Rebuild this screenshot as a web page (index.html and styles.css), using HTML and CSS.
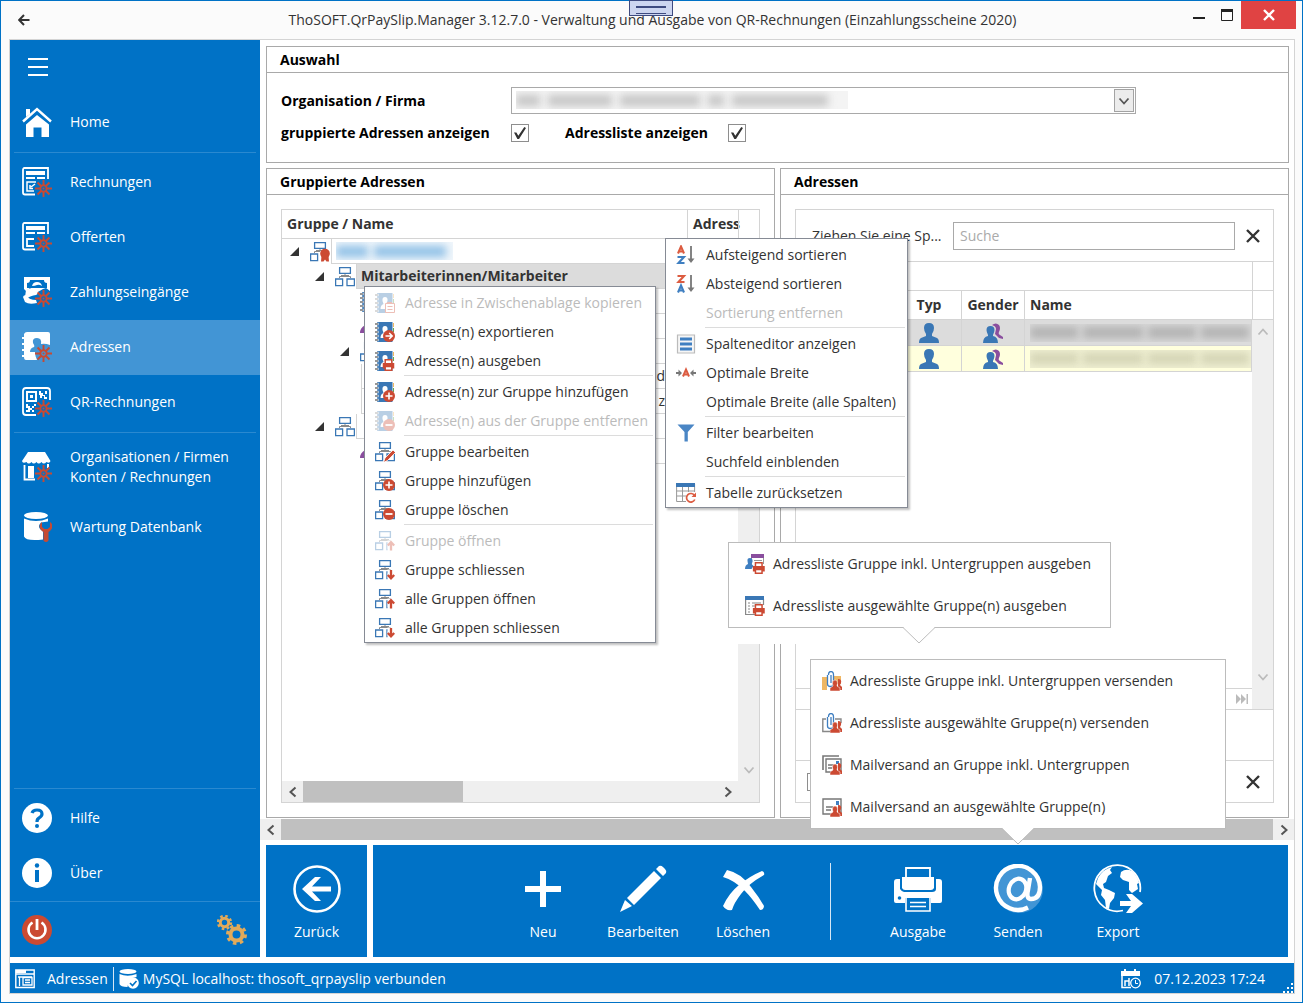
FILE: index.html
```html
<!DOCTYPE html>
<html lang="de">
<head>
<meta charset="utf-8">
<title>ThoSOFT.QrPaySlip.Manager</title>
<link rel="stylesheet" href="styles.css">
</head>
<body>
<svg class="sprite" aria-hidden="true">
  <symbol id="spark" viewBox="0 0 16 16"><g stroke="#c64a33" stroke-width="1.8" fill="none"><circle cx="8" cy="8" r="3"/><path d="M8 0v5M8 11v5M0 8h5M11 8h5M2.4 2.4l3.5 3.5M10.1 10.1l3.5 3.5M13.6 2.4l-3.5 3.5M5.9 10.1l-3.5 3.5"/></g><circle cx="8" cy="8" r="1" fill="#c64a33"/></symbol>
  <symbol id="home" viewBox="0 0 30 30"><path d="M4 2h4v5L4 10z" fill="#fff"/><path d="M1 14.5 15 2.2l14 12.3" fill="none" stroke="#fff" stroke-width="2.4"/><path d="M4 17.500 15 8l12 9.500V30h-7.500V20.500h-8V30H4z" fill="#fff"/></symbol>
  <symbol id="bill" viewBox="0 0 30 30"><path d="M26 12V1H2.500Q1 1 1 3v22.500q0 2 2 2h10" fill="none" stroke="#fff" stroke-width="1.800"/><path d="M4 4h19v4H4zM4 10h9v2H4zM15 10h8v2h-8z" fill="#fff"/><path d="M14 15H5v9h7M8 18v3.500h3M9 20l4-3" fill="none" stroke="#fff" stroke-width="1.500"/><use href="#spark" x="13" y="13" width="17" height="17"/></symbol>
  <symbol id="offer" viewBox="0 0 30 30"><path d="M26 12V1H2.500Q1 1 1 3v22.500q0 2 2 2h10" fill="none" stroke="#fff" stroke-width="1.800"/><path d="M4 4h19v4H4zM4 10h9v2H4zM15 10h8v2h-8z" fill="#fff"/><path d="M12 17H5v7h7" fill="none" stroke="#fff" stroke-width="1.800"/><use href="#spark" x="13" y="13" width="17" height="17"/></symbol>
  <symbol id="pay" viewBox="0 0 30 30"><path d="M2 0h26v14l-4-3-3 1-7 4-6-5-4 3-2-2z" fill="#fff"/><path d="M5 6q3 0 3-3h14q0 3 3 3v5H5z" fill="#0072c6"/><path d="M10 9q1-4 5-4t5 4q-3-2-5-1t-5 1z" fill="#fff"/><path d="M4 13q5-3 9 0l4 3-3 2q-6 1-8 3l-3-1zM1 20q1-3 4-1 2 4 9 4l1 3q-8 2-12-1z" fill="#fff"/><use href="#spark" x="13" y="13" width="17" height="17"/></symbol>
  <symbol id="contacts" viewBox="0 0 30 30"><path d="M2 2q1-2 3-2h21q2 0 2 2v11q-5-2-9-1 1-6-4-6t-4 5q2 3 1 4-4 1-4 5h5q0 4 2 8H4q-2 0-2-3H0v-2h2v-4H0v-2h2v-4H0v-2h2V7H0V5h2z" fill="#fff"/><use href="#spark" x="13" y="13" width="17" height="17"/></symbol>
  <symbol id="qr" viewBox="0 0 30 30"><path d="M28 13V4q0-3-3-3H4Q1 1 1 4v21q0 3 3 3h10" fill="none" stroke="#fff" stroke-width="1.800"/><path d="M5 5h9v9H5z" fill="none" stroke="#fff" stroke-width="2"/><path d="M8 8h3v3H8zM17 4h2v2h2v2h2V4h2v3h-2v3h2v2h-3v-3h-2v2h-2V8h-1zM4 17h2v2h2v2h2v-2h2v-2h2v2h-2v2h-2v2h2v2h-2v-2H8v2H4v-2h2v-2H4z" fill="#fff"/><use href="#spark" x="13" y="13" width="17" height="17"/></symbol>
  <symbol id="shop" viewBox="0 0 30 30"><path d="M6 0h17l5.500 9q-1 3-4 1-3 3-5 0-3 3-5 0-3 3-5 0-3 3-5 0-4 2-4.500-1z" fill="#fff"/><path d="M2.500 13v14.500H13" fill="none" stroke="#fff" stroke-width="1.800"/><path d="M6 14h6v12H6z" fill="#fff"/><path d="M26 12v4" stroke="#fff" stroke-width="2"/><use href="#spark" x="13" y="13" width="17" height="17"/></symbol>
  <symbol id="dbtool" viewBox="0 0 30 30"><ellipse cx="14" cy="3.500" rx="12" ry="3.500" fill="#fff"/><path d="M2 6.500q12 5 24 0v3l-7 1q-5 5 2 9v8q-17 2-19-3z" fill="#fff"/><path d="M20 10q-5 4 0 9l1.500 1v8.500q2.500 3 5 0V20l1.500-1q5-5 0-9v5l-2.500 2h-3L20 15z" fill="#c64a33"/></symbol>
  <symbol id="help" viewBox="0 0 30 30"><circle cx="15" cy="15" r="15" fill="#fff"/><path d="M10 10q1-3 5-3 5 0 5 4 0 2-3 4-2 1-2 4" fill="none" stroke="#0072c6" stroke-width="3.200"/><circle cx="15" cy="23" r="2" fill="#0072c6"/></symbol>
  <symbol id="info" viewBox="0 0 30 30"><circle cx="15" cy="15" r="15" fill="#fff"/><circle cx="15" cy="7.500" r="2.200" fill="#0072c6"/><path d="M15 12v12" stroke="#0072c6" stroke-width="4"/></symbol>
  <symbol id="power" viewBox="0 0 30 30"><circle cx="15" cy="15" r="15" fill="#cb4a32"/><path d="M10.500 7.500a8.500 8.500 0 1 0 9 0" fill="none" stroke="#fff" stroke-width="2.600"/><path d="M15 4v11" stroke="#fff" stroke-width="2.800"/></symbol>
  <symbol id="gears" viewBox="0 0 30 30"><g fill="none" stroke="#e2aa5a"><circle cx="7.500" cy="7.500" r="4.200" stroke-width="3"/><circle cx="7.500" cy="7.500" r="6.500" stroke-width="2.400" stroke-dasharray="2.550 2.550"/><circle cx="19.500" cy="19.500" r="6" stroke-width="4"/><circle cx="19.500" cy="19.500" r="9" stroke-width="3" stroke-dasharray="3.530 3.530"/></g></symbol>

  <symbol id="back" viewBox="0 0 48 48"><circle cx="24" cy="24" r="22.500" fill="none" stroke="#fff" stroke-width="2.600"/><path d="M9 24 22 12h6L19 21.500h19v5H19L28 36h-6z" fill="#fff"/></symbol>
  <symbol id="plus" viewBox="0 0 48 48"><path d="M24 6v36M6 24h36" stroke="#fff" stroke-width="6"/></symbol>
  <symbol id="pencil" viewBox="0 0 48 48"><path d="M1 47 6 35l7 6zM8 33 35 6l7 7L15 40zM37 4l3-3q2-1 4 1l2 2q2 2 1 4l-3 3z" fill="#fff"/></symbol>
  <symbol id="cross" viewBox="0 0 48 48"><path d="M4 12 8 5Q22 8 32 22q8 10 13 19 0 4-4 4Q33 33 26 26 15 15 4 12z" fill="#fff"/><path d="M43 6q3 1 2 4Q29 19 22 29q-7 9-9 16-6 1-9-4 6-13 16-21Q31 11 43 6z" fill="#fff"/></symbol>
  <symbol id="printer" viewBox="0 0 48 48"><path d="M12 13V3h24v10" fill="none" stroke="#fff" stroke-width="1.800"/><path d="M8 12h32v11q-1 2-3 2H11q-2 0-3-2z" fill="#fff"/><path d="M3 14h3v10q2 3 4 3h28q4 0 4-3V14h3q3 0 3 3v19q0 2-2 2h-9v-5H11v5H2q-2 0-2-2V17q0-3 3-3z" fill="#fff"/><circle cx="5.500" cy="33" r="1.800" fill="#0072c6"/><path d="M12 33v13h24V33M16 37.500h16M16 41.500h16" fill="none" stroke="#fff" stroke-width="1.600"/></symbol>
  <symbol id="at" viewBox="0 0 50 50"><circle cx="26" cy="25" r="24" fill="#4295d5"/><g fill="none" stroke="#fff"><path d="M35 43.500A22 22 0 1 1 47 23q0 12-9 12-5 0-3-9l2-12" stroke-width="4.400"/><ellipse cx="24.500" cy="25" rx="8.500" ry="10.500" transform="rotate(22 24.500 25)" stroke-width="4.200"/></g></symbol>
  <symbol id="globe" viewBox="0 0 50 50"><path d="M30 46.500A23 23 0 1 1 47 28" fill="none" stroke="#fff" stroke-width="1.800"/><path d="M5 14Q10 5 19 3l-2 3 2 3-4 3-2 6-3 2 1 4 5 2 6 3-1 5-4 5-1 6-3-1-1-8-4-5 1-5-6-6zM28 8q5-4 11-1 6 6 7 12l-2 1 1 5-6 4-3-3v-8l-6-2-3-3z" fill="#fff"/><path d="M27 37v5h11l-5 7h6l11-9.500L39 30h-6l5 7z" fill="#fff"/></symbol>

  <symbol id="book" viewBox="0 0 20 20"><path d="M2 0h15.500v20H2z" fill="#3a77b5"/><path d="M0 2h3.500M0 6h3.500M0 10h3.500M0 14h3.500M0 18h3.500" stroke="#fff" stroke-width="2.600"/><path d="M0 2h3M0 6h3M0 10h3M0 14h3M0 18h3" stroke="#777" stroke-width="1.400"/><path d="M18.500 1v4" stroke="#efb763"/><path d="M18.500 6v4" stroke="#6aa84f"/><path d="M10 4q3 0 2.500 4l-1 2 3 1.500V16H5.500q0-4 3-5l-1-3Q7 4 10 4z" fill="#fff"/></symbol>
  <symbol id="disc" viewBox="0 0 12 12"><circle cx="6" cy="6" r="6" fill="#cc4a33"/></symbol>
  <symbol id="miniprint" viewBox="0 0 12 12"><path d="M2 0h8v6H2z" fill="#fff"/><path d="M2.700 5V.800h6.600V5" fill="none" stroke="#cc4a33" stroke-width="1.500"/><path d="M0 4h12v5.500H0z" fill="#cc4a33"/><path d="M2.700 7.500h6.600v3.700H2.700z" fill="#fff" stroke="#cc4a33" stroke-width="1.500"/></symbol>
  <symbol id="book-copy" viewBox="0 0 20 20"><use href="#book"/><path d="M10.500 10.500h9v9h-9z" fill="#fff" stroke="#cc4a33"/><path d="M12 9.500h5M12.500 13.500h5M12.500 16.500h5" stroke="#cc4a33"/></symbol>
  <symbol id="book-export" viewBox="0 0 20 20"><use href="#book"/><use href="#disc" x="8" y="8" width="12" height="12"/><path d="M10.500 14h6.500M14.200 11l3 3-3 3" fill="none" stroke="#fff" stroke-width="1.500"/></symbol>
  <symbol id="book-print" viewBox="0 0 20 20"><use href="#book"/><use href="#miniprint" x="7.500" y="8" width="12" height="12"/></symbol>
  <symbol id="book-plus" viewBox="0 0 20 20"><use href="#book"/><use href="#disc" x="8" y="8" width="12" height="12"/><path d="M10.500 14h7M14 10.500v7" stroke="#fff" stroke-width="1.600"/></symbol>
  <symbol id="book-minus" viewBox="0 0 20 20"><use href="#book"/><use href="#disc" x="8" y="8" width="12" height="12"/><path d="M10.500 14h7" stroke="#fff" stroke-width="1.800"/></symbol>
  <symbol id="org" viewBox="0 0 20 20"><path d="M10 7v2.500M4.500 11V9.500h11V11M6 8.500h8" fill="none" stroke="#8a8a8a"/><g fill="#fff" stroke="#3a77b5" stroke-width="1.300"><path d="M4.600.6h10.800v5.800H4.600zM.6 12h7v6.600h-7zM12 12h7.400v6.600H12z"/></g></symbol>
  <symbol id="org-award" viewBox="0 0 20 20"><use href="#org"/><path d="M10 9h10v11H10z" fill="#fff"/><circle cx="15" cy="11.500" r="4.800" fill="#cc4a33"/><path d="M11.500 13.500h7l.5 6h-2.500l-1.500-2-1.500 2H11z" fill="#cc4a33"/></symbol>
  <symbol id="org-edit" viewBox="0 0 20 20"><use href="#org"/><path d="M8.500 20.500 10 16l8-8 2.500 2.500-8 8z" fill="#cc4a33" stroke="#fff" stroke-width=".8"/></symbol>
  <symbol id="org-plus" viewBox="0 0 20 20"><use href="#org"/><use href="#disc" x="8" y="8" width="12" height="12"/><path d="M10.500 14h7M14 10.500v7" stroke="#fff" stroke-width="1.600"/></symbol>
  <symbol id="org-minus" viewBox="0 0 20 20"><use href="#org"/><use href="#disc" x="8" y="8" width="12" height="12"/><path d="M10.500 14h7" stroke="#fff" stroke-width="1.800"/></symbol>
  <symbol id="org-up" viewBox="0 0 20 20"><use href="#org"/><path d="M12.500 9.500H20V20h-7.500z" fill="#fff"/><path d="M16 19.500V11M12.800 14.500l3.200-3.300 3.200 3.300" fill="none" stroke="#cc4a33" stroke-width="2.300"/></symbol>
  <symbol id="org-down" viewBox="0 0 20 20"><use href="#org"/><path d="M12.500 9.500H20V20h-7.500z" fill="#fff"/><path d="M16 10v8.500M12.800 15 16 18.300l3.200-3.300" fill="none" stroke="#cc4a33" stroke-width="2.300"/></symbol>

  <symbol id="sort-az" viewBox="0 0 20 20"><g fill="none" stroke-width="2.100"><path d="M2 8.500 5 1.500l3 7M3.500 6.500h3" stroke="#dc5c41"/><path d="M1.500 12H8l-5.500 6H8.500" stroke="#3f7fc1"/></g><path d="M15 1v14" stroke="#777" stroke-width="1.800"/><path d="M11.500 13.500h7L15 18z" fill="#777"/></symbol>
  <symbol id="sort-za" viewBox="0 0 20 20"><g fill="none" stroke-width="2.100"><path d="M1.500 2H8L2.500 8H8.500" stroke="#dc5c41"/><path d="M2 18.500 5 11.500l3 7M3.500 16.500h3" stroke="#3f7fc1"/></g><path d="M15 1v14" stroke="#777" stroke-width="1.800"/><path d="M11.500 13.500h7L15 18z" fill="#777"/></symbol>
  <symbol id="columns" viewBox="0 0 20 20"><path d="M1.500 1h17v18h-17z" fill="#f6f6f6" stroke="#bbb" stroke-width="1.200"/><path d="M4 5h12M4 10h12M4 15h12" stroke="#3f7fc1" stroke-width="3.200"/></symbol>
  <symbol id="fit" viewBox="0 0 20 20"><path d="M7 13.500 10 6.500l3 7M8.500 11.500h3" fill="none" stroke="#dc5c41" stroke-width="2"/><path d="M0 10h4M16 10h4" stroke="#777" stroke-width="2"/><path d="M2.500 6.500 6 10l-3.500 3.500zM17.500 6.500 14 10l3.500 3.500z" fill="#777"/></symbol>
  <symbol id="filter" viewBox="0 0 20 20"><path d="M1.500 1.500h17L11.800 9v9.500H8.500V9z" fill="#4a86c5"/></symbol>
  <symbol id="table-reset" viewBox="0 0 20 20"><path d="M.6 1h18v17.500h-18zM.6 8h18M.6 13h18M6.500 3v15M12.500 3v15" fill="#fff" stroke="#999"/><path d="M0 0h19v4H0z" fill="#3a77b5"/><path d="M10 9h10v11H10z" fill="#fff"/><path d="M18.500 12.500a4.300 4.300 0 1 0 .3 4" fill="none" stroke="#dc5c41" stroke-width="1.700"/><path d="M20 9.500v4.500h-4.500z" fill="#dc5c41"/></symbol>

  <symbol id="list-sub" viewBox="0 0 20 20"><path d="M6 0h13v4H6z" fill="#8a4e9e"/><path d="M6.500 4v9M18.500 4v6M9 6.500h8" stroke="#999" fill="none"/><path d="M5 4q3 0 2.500 4l-1 2 2 2-2 3H0q0-4 3-5l-.5-3Q2 4 5 4z" fill="#3f7fc1"/><use href="#miniprint" x="7.500" y="8" width="12.500" height="12"/></symbol>
  <symbol id="list" viewBox="0 0 20 20"><path d="M.6 3v15.500H10M18.500 3v6" fill="none" stroke="#888" stroke-width="1.200"/><path d="M0 0h19v4H0z" fill="#3a77b5"/><path d="M3 7h2M3 10h2M3 13h2M3 16h2M7 7h9M7 10h4" stroke="#888" stroke-width="1.200"/><use href="#miniprint" x="7.500" y="8" width="12.500" height="12"/></symbol>
  <symbol id="pawn" viewBox="0 0 12 12"><path d="M8 0q4 0 3 4l-1 2 2 2v3H8V2z" fill="#cc4a33"/><path d="M5 1q3 0 2.500 3.500L7 7l3 2v3H0V9l3-2-.500-2.500Q2 1 5 1z" fill="#cc4a33" stroke="#fff" stroke-width=".5"/></symbol>
  <symbol id="clip" viewBox="0 0 20 20"><path d="M5.500 4v9q0 2.500 3 2.500T11.500 13V4q0-3.500-2.500-3.500T6.500 4" fill="#fff" stroke="#3f7fc1" stroke-width="1.300"/><path d="M9 4v8" stroke="#3f7fc1" stroke-width="1.300"/></symbol>
  <symbol id="clip-sub" viewBox="0 0 20 20"><path d="M0 6h5v13H0zM11 5h8v8h-8z" fill="#efb763"/><use href="#clip"/><use href="#pawn" x="8" y="8" width="12" height="12"/></symbol>
  <symbol id="clip-one" viewBox="0 0 20 20"><path d="M4 6H.8v12.500H8M13 6h6v4" fill="none" stroke="#888" stroke-width="1.400"/><use href="#clip"/><use href="#pawn" x="8" y="8" width="12" height="12"/></symbol>
  <symbol id="mail-sub" viewBox="0 0 20 20"><path d="M1 15V1h16" fill="none" stroke="#777" stroke-width="1.600"/><path d="M4 4h15v13H4zM6 10h6M6 13h4" fill="#fff" stroke="#777" stroke-width="1.400"/><path d="M14 6h3v3h-3z" fill="#3f7fc1"/><use href="#pawn" x="8" y="8" width="12" height="12"/></symbol>
  <symbol id="mail-one" viewBox="0 0 20 20"><path d="M1 2h18v15H1zM4 10h7M4 13h5" fill="#fff" stroke="#777" stroke-width="1.400"/><path d="M14 4h3v4h-3z" fill="#3f7fc1"/><use href="#pawn" x="8" y="8" width="12" height="12"/></symbol>
  <symbol id="person" viewBox="0 0 20 20"><path d="M10 0q5 0 5 5 0 3-2 6v2l5 2q2 1 2 5H0q0-4 2-5l5-2v-2Q5 8 5 5q0-5 5-5z" fill="#3a77b5"/></symbol>
  <symbol id="gender" viewBox="0 0 20 20"><path d="M9 2q4-3 7 0 2 3 0 7-1 2 1 3l3 2v2l-4-1-4-4 1-5q0-3-4-4z" fill="#8a4e9e"/><path d="M7.500 3q4 0 4 4 0 2-1.500 5v1q5 1 5 7H0q0-6 5-7v-1Q3.500 9 3.500 7q0-4 4-4z" fill="#3a77b5"/></symbol>
  <symbol id="woman" viewBox="0 0 20 20"><path d="M5 8q-5 3-5 8h8z" fill="#8a4e9e"/></symbol>

  <symbol id="form" viewBox="0 0 20 20"><path d="M.8 1h18.400v17.500H.8zM1 5h18" fill="none" stroke="#fff" stroke-width="1.400"/><path d="M1 1h10v3H1z" fill="#fff"/><path d="M3 8h14M4.500 8v9M8 8.500h9V16H8zM10 11h5M10 13.500h5" fill="none" stroke="#fff" stroke-width="1.300"/></symbol>
  <symbol id="db-ok" viewBox="0 0 20 20"><ellipse cx="9" cy="2.500" rx="8.500" ry="2.500" fill="#fff"/><path d="M.5 5q8 3.500 17 0v3q-8 0-9 10-7 0-8-3z" fill="#fff"/><circle cx="14" cy="14" r="5.800" fill="#fff"/><path d="M11 14l2.500 2.500 4-4.500" fill="none" stroke="#0072c6" stroke-width="1.600"/></symbol>
  <symbol id="calendar" viewBox="0 0 20 20"><path d="M0 2h3V0h2v2h8V0h2v2h4v5H0z" fill="#fff"/><path d="M1 7v11.500h9M4 17v-5h4M8 9v8" fill="none" stroke="#fff" stroke-width="1.500"/><circle cx="14.500" cy="14" r="4.800" fill="#0072c6" stroke="#fff" stroke-width="1.300"/><path d="M14.500 11v3.500h2.500" fill="none" stroke="#fff"/></symbol>
  <symbol id="left" viewBox="0 0 10 12"><path d="M7.500 1.500 2.500 6l5 4.500" fill="none" stroke="currentColor" stroke-width="2"/></symbol>
  <symbol id="right" viewBox="0 0 10 12"><path d="M2.500 1.500l5 4.500-5 4.500" fill="none" stroke="currentColor" stroke-width="2"/></symbol>
  <symbol id="down" viewBox="0 0 12 10"><path d="M1.500 2.500 6 7.500l4.500-5" fill="none" stroke="currentColor" stroke-width="1.800"/></symbol>
  <symbol id="up" viewBox="0 0 12 10"><path d="M1.500 7.500 6 2.500l4.500 5" fill="none" stroke="currentColor" stroke-width="1.800"/></symbol>
  <symbol id="x" viewBox="0 0 14 14"><path d="M1 1l12 12M13 1 1 13" stroke="currentColor" stroke-width="2.400"/></symbol>
</svg>

<div class="window">
  <header class="titlebar">
    <button class="nav-back" aria-label="Zurück"><svg viewBox="0 0 12 12"><path d="M11.500 6H2M6 1 1.200 6 6 11" fill="none" stroke="#333" stroke-width="2"/></svg></button>
    <h1>ThoSOFT.QrPaySlip.Manager 3.12.7.0 - Verwaltung und Ausgabe von QR-Rechnungen (Einzahlungsscheine 2020)</h1>
    <div class="win-buttons">
      <button class="win-btn" aria-label="Minimieren"><svg viewBox="0 0 12 12"><path d="M0 9h12" stroke="#222" stroke-width="2"/></svg></button>
      <button class="win-btn" aria-label="Maximieren"><svg viewBox="0 0 12 12"><path d="M.5 1h11v10.500H.5z" fill="none" stroke="#222"/><path d="M0 0h12v3H0z" fill="#222"/></svg></button>
      <button class="win-btn close" aria-label="Schliessen"><svg viewBox="0 0 12 12"><path d="M1 1l10 10M11 1 1 11" stroke="#fff" stroke-width="2.400"/></svg></button>
    </div>
    <span class="grab-tab"></span>
  </header>

  <div class="client">
    <nav class="sidebar">
      <button class="burger" aria-label="Menü"><svg viewBox="0 0 20 18"><path d="M0 1h20M0 9h20M0 17h20" stroke="#fff" stroke-width="2"/></svg></button>
      <a class="nav-item" href="#"><svg><use href="#home"/></svg>Home</a>
      <hr>
      <a class="nav-item" href="#"><svg><use href="#bill"/></svg>Rechnungen</a>
      <a class="nav-item" href="#"><svg><use href="#offer"/></svg>Offerten</a>
      <a class="nav-item" href="#"><svg><use href="#pay"/></svg>Zahlungseingänge</a>
      <a class="nav-item active" href="#"><svg><use href="#contacts"/></svg>Adressen</a>
      <a class="nav-item" href="#"><svg><use href="#qr"/></svg>QR-Rechnungen</a>
      <hr>
      <a class="nav-item double" href="#"><svg><use href="#shop"/></svg><span>Organisationen / Firmen<br>Konten / Rechnungen</span></a>
      <a class="nav-item" href="#"><svg><use href="#dbtool"/></svg>Wartung Datenbank</a>
      <div class="spacer"></div>
      <hr>
      <a class="nav-item" href="#"><svg><use href="#help"/></svg>Hilfe</a>
      <a class="nav-item" href="#"><svg><use href="#info"/></svg>Über</a>
      <div class="nav-foot">
        <button aria-label="Beenden"><svg><use href="#power"/></svg></button>
        <button aria-label="Einstellungen"><svg><use href="#gears"/></svg></button>
      </div>
    </nav>

    <main class="main">
      <div class="panels">
        <section class="panel">
          <h2>Auswahl</h2>
          <div class="form">
            <label for="org-select">Organisation / Firma</label>
            <div class="combo">
              <select id="org-select"><option></option></select>
              <span class="redact redact-org"><i></i><i></i><i></i><i></i><i></i></span>
              <span class="combo-arrow"><svg><use href="#down"/></svg></span>
            </div>
            <label for="show-groups">gruppierte Adressen anzeigen</label>
            <div class="checks">
              <input type="checkbox" id="show-groups" checked>
              <label for="show-list">Adressliste anzeigen</label>
              <input type="checkbox" id="show-list" checked>
            </div>
          </div>
        </section>

        <div class="columns">
          <section class="panel">
            <h2>Gruppierte Adressen</h2>
            <div class="box tree-box">
              <div class="tree-view">
                <table class="tree">
                  <thead><tr><th>Gruppe / Name</th><th class="addr">Adress</th></tr></thead>
                  <tbody>
                    <tr><td><div class="node l1"><b class="tri"></b><svg><use href="#org-award"/></svg><span class="cell"><span class="redact redact-name"><i></i><i></i></span></span></div></td><td></td></tr>
                    <tr class="selected"><td colspan="2"><div class="node l2"><b class="tri"></b><svg><use href="#org"/></svg><span class="cell"><strong>Mitarbeiterinnen/Mitarbeiter</strong></span></div></td></tr>
                    <tr><td><div class="node l3"><b></b><svg><use href="#book"/></svg><span class="cell"></span></div></td><td></td></tr>
                    <tr><td><div class="node l3"><b></b><svg><use href="#woman"/></svg><span class="cell"></span></div></td><td></td></tr>
                    <tr><td><div class="node l3"><b class="tri"></b><svg><use href="#org"/></svg><span class="cell"></span></div></td><td></td></tr>
                    <tr><td><div class="node l3"><b></b><span class="cell end">d</span></div></td><td></td></tr>
                    <tr><td><div class="node l3"><b></b><span class="cell end">z</span></div></td><td></td></tr>
                    <tr><td><div class="node l2"><b class="tri"></b><svg><use href="#org"/></svg><span class="cell"></span></div></td><td></td></tr>
                    <tr><td><div class="node l3"><b></b><svg><use href="#woman"/></svg><span class="cell"></span></div></td><td></td></tr>
                  </tbody>
                </table>
                <div class="hscroll"><span class="arrow"><svg class="h"><use href="#left"/></svg></span><span class="thumb"></span><span class="arrow"><svg class="h"><use href="#right"/></svg></span></div>
              </div>
              <div class="vscroll"><span class="corner"></span><span class="track"><svg class="v"><use href="#down"/></svg></span></div>
            </div>
          </section>

          <section class="panel">
            <h2>Adressen</h2>
            <div class="box list-box">
              <div class="search-row">
                <span class="hint">Ziehen Sie eine Sp...</span>
                <input type="text" placeholder="Suche" aria-label="Suche">
                <button class="clear" aria-label="Suche löschen"><svg><use href="#x"/></svg></button>
              </div>
              <div class="list-view">
                <div class="list-main">
                  <div class="band"></div>
                  <table class="list">
                    <colgroup><col class="c-sel"><col class="c-typ"><col class="c-gender"><col></colgroup>
                    <thead><tr><th></th><th>Typ</th><th>Gender</th><th class="name">Name</th></tr></thead>
                    <tbody>
                      <tr class="selected"><td></td><td><svg><use href="#person"/></svg></td><td><svg><use href="#gender"/></svg></td><td class="name"><span class="redact redact-row"><i></i><i></i><i></i><i></i></span></td></tr>
                      <tr class="alt"><td></td><td><svg><use href="#person"/></svg></td><td><svg><use href="#gender"/></svg></td><td class="name"><span class="redact redact-row light"><i></i><i></i><i></i><i></i></span></td></tr>
                    </tbody>
                  </table>
                  <div class="spacer"></div>
                  <div class="pager"><svg viewBox="0 0 12 12"><path d="M0 1l5 5-5 5zM5 1l5 5-5 5zM10.500 1h1.500v10h-1.500z" fill="#bbb"/></svg></div>
                </div>
                <div class="vscroll list-scroll"><span class="corner"></span><span class="corner"></span><span class="track both"><svg class="v"><use href="#up"/></svg><svg class="v"><use href="#down"/></svg></span></div>
              </div>
              <div class="summary"></div>
              <div class="filter-row"><input type="checkbox" aria-label="Filter"><button class="clear" aria-label="Filter löschen"><svg><use href="#x"/></svg></button></div>
            </div>
          </section>
        </div>
      </div>

      <div class="hscroll wide"><span class="arrow"><svg class="h"><use href="#left"/></svg></span><span class="thumb"></span><span class="arrow"><svg class="h"><use href="#right"/></svg></span></div>

      <div class="toolbar">
        <div class="tools solo"><button class="tool"><svg class="medium"><use href="#back"/></svg>Zurück</button></div>
        <div class="tools">
          <button class="tool"><svg class="medium"><use href="#plus"/></svg>Neu</button>
          <button class="tool"><svg class="medium"><use href="#pencil"/></svg>Bearbeiten</button>
          <button class="tool"><svg class="medium"><use href="#cross"/></svg>Löschen</button>
          <span class="divider"></span>
          <button class="tool"><svg class="medium"><use href="#printer"/></svg>Ausgabe</button>
          <button class="tool"><svg><use href="#at"/></svg>Senden</button>
          <button class="tool"><svg><use href="#globe"/></svg>Export</button>
        </div>
      </div>
    </main>

    <footer class="status">
      <svg><use href="#form"/></svg><span class="where">Adressen</span>
      <svg><use href="#db-ok"/></svg><span>MySQL localhost: thosoft_qrpayslip verbunden</span>
      <span class="spacer"></span>
      <svg><use href="#calendar"/></svg><time>07.12.2023 17:24</time>
      <svg class="grip" viewBox="0 0 10 10"><path d="M8 0h2v2H8zM4 4h2v2H4zM8 4h2v2H8zM0 8h2v2H0zM4 8h2v2H4zM8 8h2v2H8z" fill="#fff"/></svg>
    </footer>
  </div>
</div>

<div class="menu menu-address" role="menu">
  <button disabled><svg><use href="#book-copy"/></svg>Adresse in Zwischenablage kopieren</button>
  <button><svg><use href="#book-export"/></svg>Adresse(n) exportieren</button>
  <button><svg><use href="#book-print"/></svg>Adresse(n) ausgeben</button>
  <hr>
  <button><svg><use href="#book-plus"/></svg>Adresse(n) zur Gruppe hinzufügen</button>
  <button disabled><svg><use href="#book-minus"/></svg>Adresse(n) aus der Gruppe entfernen</button>
  <hr>
  <button><svg><use href="#org-edit"/></svg>Gruppe bearbeiten</button>
  <button><svg><use href="#org-plus"/></svg>Gruppe hinzufügen</button>
  <button><svg><use href="#org-minus"/></svg>Gruppe löschen</button>
  <hr>
  <button disabled><svg><use href="#org-up"/></svg>Gruppe öffnen</button>
  <button><svg><use href="#org-down"/></svg>Gruppe schliessen</button>
  <button><svg><use href="#org-up"/></svg>alle Gruppen öffnen</button>
  <button><svg><use href="#org-down"/></svg>alle Gruppen schliessen</button>
</div>

<div class="menu menu-column" role="menu">
  <button><svg><use href="#sort-az"/></svg>Aufsteigend sortieren</button>
  <button><svg><use href="#sort-za"/></svg>Absteigend sortieren</button>
  <button disabled><svg></svg>Sortierung entfernen</button>
  <hr>
  <button><svg><use href="#columns"/></svg>Spalteneditor anzeigen</button>
  <button><svg><use href="#fit"/></svg>Optimale Breite</button>
  <button><svg></svg>Optimale Breite (alle Spalten)</button>
  <hr>
  <button><svg><use href="#filter"/></svg>Filter bearbeiten</button>
  <button><svg></svg>Suchfeld einblenden</button>
  <hr>
  <button><svg><use href="#table-reset"/></svg>Tabelle zurücksetzen</button>
</div>

<div class="popup popup-print">
  <div class="popup-box">
    <button><svg><use href="#list-sub"/></svg>Adressliste Gruppe inkl. Untergruppen ausgeben</button>
    <button><svg><use href="#list"/></svg>Adressliste ausgewählte Gruppe(n) ausgeben</button>
  </div>
  <svg class="tip" viewBox="0 0 32 17"><path d="M0 0h32L16 16z" fill="#fff"/><path d="M0 .500 16 16 32 .500" fill="none" stroke="#bcbcbc"/></svg>
</div>

<div class="popup popup-send">
  <div class="popup-box">
    <button><svg><use href="#clip-sub"/></svg>Adressliste Gruppe inkl. Untergruppen versenden</button>
    <button><svg><use href="#clip-one"/></svg>Adressliste ausgewählte Gruppe(n) versenden</button>
    <button><svg><use href="#mail-sub"/></svg>Mailversand an Gruppe inkl. Untergruppen</button>
    <button><svg><use href="#mail-one"/></svg>Mailversand an ausgewählte Gruppe(n)</button>
  </div>
  <svg class="tip" viewBox="0 0 32 17"><path d="M0 0h32L16 16z" fill="#fff"/><path d="M0 .500 16 16 32 .500" fill="none" stroke="#bcbcbc"/></svg>
</div>
</body>
</html>
```
FILE: styles.css
```css
* { box-sizing: border-box; }
body {
  margin: 0;
  position: relative;
  font: 14px/20px "Open Sans", "Noto Sans", sans-serif;
  color: #333;
}
button, input, select { font: inherit; color: inherit; }
button { padding: 0; border: 0; background: none; }
a { color: inherit; text-decoration: none; }
hr { margin: 0; border: 0; }
svg { display: block; flex: none; }
.sprite { position: absolute; width: 0; height: 0; }
.spacer { flex: 1; }

.window {
  display: flex;
  flex-direction: column;
  min-height: 100vh;
  padding: 0 7px 8px 8px;
  border: 1px solid #0072c6;
  background: #fbfbfb;
}

/* Title bar */
.titlebar {
  position: relative;
  display: flex;
  align-items: flex-start;
  justify-content: space-between;
  height: 38px;
  margin-right: -1px;
}
.nav-back { padding: 13px 9px; }
.nav-back svg { width: 12px; height: 12px; }
.titlebar h1 {
  position: absolute;
  left: 0;
  right: 0;
  top: 9px;
  margin: 0;
  font-size: 14px;
  font-weight: 400;
  text-align: center;
}
.win-buttons { display: flex; position: relative; }
.win-btn { display: grid; place-items: center; width: 28px; height: 28px; }
.win-btn svg { width: 12px; height: 12px; }
.win-btn.close { width: 55px; background: #e04343; }
.grab-tab {
  position: absolute;
  left: calc(50% - 24px);
  top: -1px;
  width: 44px;
  height: 16px;
  padding: 5px 6px;
  border: 1px solid #3d4a80;
  background: #ccd5f0;
}
.grab-tab::before {
  content: "";
  display: block;
  height: 5px;
  border: solid #3d4a80;
  border-width: 2px 0 1px;
}

.client {
  flex: 1;
  display: grid;
  grid-template: 1fr 30px / 250px 1fr;
  row-gap: 6px;
  border: 1px solid #d4d4d4;
  background: #fff;
}

/* Sidebar */
.sidebar { display: flex; flex-direction: column; background: #0072c6; color: #fff; }
.burger { height: 54px; margin-bottom: 1px; padding-left: 18px; }
.burger svg { width: 20px; height: 18px; }
.nav-item { display: flex; align-items: center; gap: 18px; height: 55px; padding: 0 0 1px 12px; }
.nav-item svg, .nav-foot svg { width: 30px; height: 30px; }
.nav-item.double { height: 65px; }
.nav-item.active { background: #4295d5; }
.sidebar hr { height: 1px; margin: 2px 4px; background: #2a89d0; }
.nav-foot { display: flex; align-items: center; justify-content: space-between; height: 56px; padding: 0 13px 0 12px; border-top: 1px solid #2a89d0; }

/* Panels */
.main { display: flex; flex-direction: column; min-width: 0; }
.panels { flex: 1; display: flex; flex-direction: column; gap: 5px; padding: 6px 5px 1px 6px; }
.panel { display: flex; flex-direction: column; min-width: 0; border: 1px solid #a9a9a9; background: #fff; }
.panel h2 { margin: 0; padding: 3px 13px; height: 26px; border-bottom: 1px solid #a9a9a9; color: #000; font-size: 14px; line-height: 20px; }
.columns { flex: 1; display: grid; grid-template-columns: 1fr 1fr; gap: 5px; }

.form { display: grid; grid-template-columns: 230px 1fr; align-items: center; row-gap: 9px; padding: 14px 152px 19px 14px; color: #000; }
.form label { font-weight: 700; }
.combo { position: relative; display: flex; height: 27px; }
.combo select { flex: 1; appearance: none; border: 1px solid #a9a9a9; border-radius: 0; background: #fff; }
.combo-arrow { position: absolute; right: 2px; top: 2px; display: grid; place-items: center; width: 20px; height: 23px; border: 1px solid #a3a3a3; background: #ececec; pointer-events: none; }
.combo-arrow svg { width: 12px; height: 10px; color: #555; }
.checks { display: flex; align-items: center; }
.checks label { margin: 0 20px 0 36px; }
input[type="checkbox"] { position: relative; appearance: none; width: 18px; height: 18px; margin: 0; border: 1px solid #8e8e8e; background: #fff; }
input[type="checkbox"]:checked::after {
  content: "";
  position: absolute;
  inset: 2px;
  background: #333;
  clip-path: polygon(0 45%, 20% 45%, 36% 72%, 86% 0, 100% 8%, 42% 100%, 28% 100%);
}

/* Blurred personal data */
.redact { display: flex; align-items: center; gap: 8px; height: 18px; background: #f4f4f4; overflow: hidden; }
.redact i { height: 11px; background: currentColor; filter: blur(4px); }
.redact-org { position: absolute; left: 5px; top: 4px; width: 332px; color: #c4c4c4; }
.redact-org i:nth-child(1) { width: 24px; }
.redact-org i:nth-child(2) { width: 64px; }
.redact-org i:nth-child(3) { width: 80px; }
.redact-org i:nth-child(4) { width: 16px; }
.redact-org i:nth-child(5) { width: 96px; }
.redact-name { width: 117px; gap: 6px; background: #f0f6fb; color: #8dbfe6; }
.redact-name i:nth-child(1) { width: 32px; }
.redact-name i:nth-child(2) { width: 72px; }
.redact-row { gap: 5px; background: #d9d9d9; color: #b0b0b0; }
.redact-row i { width: 48px; }
.redact-row i:nth-child(2) { width: 60px; }
.redact-row.light { background: #f0f0d3; color: #d3d3b4; }

/* Grids */
.box { flex: 1; display: flex; margin: 14px; border: 1px solid #d4d4d4; }
table { width: 100%; border-collapse: separate; border-spacing: 0; table-layout: fixed; }
th, td { padding: 0; }
th { height: 29px; text-align: left; border-bottom: 1px solid #d4d4d4; }
.tree-view { flex: 1; display: flex; flex-direction: column; justify-content: space-between; min-width: 0; }
.tree th { padding-left: 5px; }
.tree th.addr { width: 51px; border-left: 1px solid #d4d4d4; }
.tree td { height: 25px; }
.tree td + td { border-bottom: 1px solid #d4d4d4; }
.node { display: flex; align-items: center; height: 25px; }
.node svg { width: 20px; height: 20px; }
.node b { width: 28px; height: 9px; }
.node .tri::before { content: ""; display: block; width: 9px; height: 9px; margin-left: 8px; background: #333; clip-path: polygon(100% 0, 100% 100%, 0 100%); }
.l2 { padding-left: 25px; }
.l3 { padding-left: 50px; }
.cell { flex: 1; display: flex; align-items: center; align-self: stretch; margin-left: 1px; padding-left: 4px; border: solid #d4d4d4; border-width: 0 0 1px 1px; }
.cell.end { justify-content: flex-end; padding-right: 22px; }
.tree .selected .cell { background: #dcdcdc; }

.hscroll { display: flex; height: 21px; background: #efefef; }
.arrow { display: grid; place-items: center; width: 21px; color: #555; }
.h { width: 10px; height: 12px; }
.v { width: 12px; height: 10px; }
.thumb { width: 160px; background: #c0c0c0; }
.hscroll .arrow:last-child { margin-left: auto; }
.wide .thumb { flex: 1; }
.vscroll { display: flex; flex-direction: column; width: 21px; }
.corner { height: 29px; border: solid #d4d4d4; border-width: 0 0 1px 1px; }
.track { flex: 1; display: flex; flex-direction: column; justify-content: flex-end; align-items: center; padding: 7px 0 27px; background: #efefef; color: #bbb; }
.track.both { justify-content: space-between; }

.list-box { flex-direction: column; }
.search-row { display: flex; align-items: center; height: 52px; padding: 0 10px 0 16px; border-bottom: 1px solid #d4d4d4; }
.hint { width: 141px; white-space: nowrap; }
.search-row input { flex: 1; min-width: 0; height: 28px; padding: 0 6px; border: 1px solid #a9a9a9; }
.search-row input::placeholder { color: #aaa; }
.clear { display: grid; place-items: center; width: 20px; height: 24px; margin-left: 8px; color: #333; }
.clear svg { width: 14px; height: 14px; }
.list-view { flex: 1; display: flex; }
.list-main { flex: 1; display: flex; flex-direction: column; min-width: 0; }
.band { height: 29px; border-bottom: 1px solid #d4d4d4; }
.c-sel { width: 101px; }
.c-typ { width: 65px; }
.c-gender { width: 63px; }
.list th { text-align: center; border-right: 1px solid #d4d4d4; }
.list th:last-child { border-right: 0; }
.list .name { text-align: left; padding-left: 5px; }
.list td { height: 26px; border: solid #d4d4d4; border-width: 0 1px 1px 0; }
.list td svg { width: 20px; height: 20px; margin: 0 auto; }
.list .selected { background: #dcdcdc; }
.list .alt { background: #ffffdd; }
.pager { display: flex; align-items: center; justify-content: flex-end; height: 21px; padding-right: 4px; border-top: 1px solid #d4d4d4; }
.pager svg { width: 12px; height: 12px; }
.summary { height: 52px; border: solid #d4d4d4; border-width: 1px 0; }
.filter-row { display: flex; align-items: center; justify-content: space-between; height: 41px; padding: 0 10px 0 11px; }

/* Toolbar */
.toolbar { display: flex; gap: 6px; padding: 5px 6px 0; }
.tools { flex: 1; display: flex; justify-content: center; align-items: center; height: 112px; background: #0072c6; color: #fff; }
.tools.solo { flex: 0 0 101px; }
.tool { display: grid; grid-template-rows: 50px 20px; row-gap: 8px; place-items: center; width: 100px; padding-top: 4px; }
.tool svg { width: 50px; height: 50px; }
.tool svg.medium { width: 48px; height: 48px; }
.divider { width: 1px; height: 77px; margin: 0 37px; background: #d5e7f5; }

/* Status bar */
.status { grid-column: 1 / -1; display: flex; align-items: center; padding: 1px 1px 0 5px; background: #0072c6; color: #fff; }
.status svg { width: 20px; height: 20px; margin-right: 4px; }
.where { margin-right: 5px; padding: 2px 5px 2px 8px; border-right: 1px solid #d5e7f5; }
.status time { margin: 0 18px 0 9px; }
.status .grip { width: 10px; height: 10px; margin: 0; align-self: flex-end; }

/* Context menus */
.menu { position: absolute; padding: 1px 0 0; border: 1px solid #868b95; background: #fff; box-shadow: 2px 2px 2px rgba(0, 0, 0, .25); }
.menu button { display: flex; align-items: center; gap: 10px; width: 100%; height: 29px; padding-left: 10px; white-space: nowrap; }
.menu svg { width: 20px; height: 20px; }
.menu button:disabled { color: #bbb; }
.menu button:disabled svg { opacity: .35; }
.menu hr { height: 1px; margin: 0 2px 1px 39px; background: #dcdcdc; }
.menu-address { left: 364px; top: 286px; width: 292px; }
.menu-column { left: 665px; top: 238px; width: 243px; }

/* Toolbar flyouts */
.popup { position: absolute; }
.popup-box { border: 1px solid #bcbcbc; background: #fff; }
.popup button { display: flex; align-items: center; gap: 8px; width: 100%; height: 42px; white-space: nowrap; }
.popup svg { width: 20px; height: 20px; }
.popup .tip { position: relative; width: 32px; height: 17px; margin-top: -1px; }
.popup-print { left: 728px; top: 542px; width: 383px; height: 102px; background: #fff; }
.popup-print button { padding-left: 16px; }
.popup-print .tip { margin-left: 175px; }
.popup-send { left: 810px; top: 659px; width: 416px; }
.popup-send button { padding-left: 11px; }
.popup-send .tip { margin-left: 192px; }
```
